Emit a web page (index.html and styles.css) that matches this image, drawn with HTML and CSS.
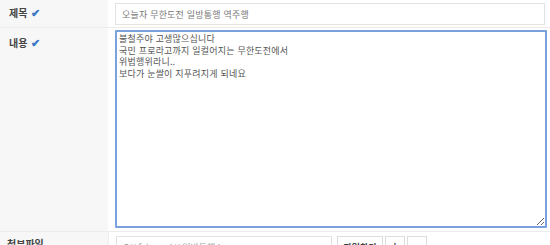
FILE: index.html
```html
<!DOCTYPE html>
<html lang="ko">
<head>
    <meta charset="UTF-8">
    <title>글쓰기</title>
    <link rel="stylesheet" href="styles.css">
</head>
<body>
    <div class="write-form">
        <div class="row row-title">
            <div class="label">제목 <span class="check">&#10004;</span></div>
            <div class="field">
                <input type="text" class="text-input" value="오늘자 무한도전 일방통행 역주행">
            </div>
        </div>
        <div class="row row-content">
            <div class="label">내용 <span class="check">&#10004;</span></div>
            <div class="field">
                <textarea class="content-area">불철주야 고생많으십니다
국민 프로라고까지 일컬어지는 무한도전에서
위법행위라니..
보다가 눈쌀이 지푸려지게 되네요</textarea>
            </div>
        </div>
        <div class="row row-file">
            <div class="label">첨부파일</div>
            <div class="field file-field">
                <input type="text" class="file-input" value="C:\\fakepath\\일방통행.jpg">
                <button class="btn">파일찾기</button>
                <button class="btn btn-sq">+</button>
                <button class="btn btn-sq">&minus;</button>
            </div>
        </div>
    </div>
</body>
</html>
```

FILE: styles.css
```css
body {
    margin: 0;
    background-color: #fff;
    font-family: "Noto Sans CJK KR", "Noto Sans", sans-serif;
    font-size: 11px;
    color: #333;
}
.write-form {
    width: 550px;
}
.row {
    display: grid;
    grid-template-columns: 108px 1fr;
    border-bottom: 1px solid #ececec;
}
.label {
    background-color: #f7f7f7;
    padding-left: 9px;
    font-weight: bold;
    color: #444;
    font-size: 10px;
}
.check {
    color: #3a78c8;
    font-size: 11px;
    margin-left: 1px;
}
.field {
    padding-left: 7px;
    padding-right: 4px;
}
.row-title {
    height: 27px;
}
.row-title .label {
    line-height: 24px;
}
.text-input {
    box-sizing: border-box;
    width: 430px;
    height: 22px;
    margin-top: 3px;
    border: 1px solid #e3e3e3;
    padding: 0 6px;
    font-family: inherit;
    font-size: 9px;
    letter-spacing: 0.2px;
    color: #777;
    outline: none;
}
.row-content {
    height: 203px;
}
.row-content .label {
    line-height: 26px;
    padding-top: 1px;
}
.content-area {
    display: block;
    box-sizing: border-box;
    width: 432px;
    height: 198px;
    margin-top: 2px;
    border: 2px solid #7aa3dd;
    border-radius: 1px;
    padding: 1px 2px;
    font-family: inherit;
    font-size: 9px;
    letter-spacing: 0.2px;
    line-height: 11.5px;
    color: #555;
    resize: vertical;
    outline: none;
}
.row-file {
    height: 40px;
    border-bottom: none;
}
.row-file .label {
    padding-left: 7px;
    line-height: 20px;
    padding-top: 2px;
}
.file-field {
    display: flex;
    gap: 2px;
    padding-top: 4px;
    border-left: 1px solid #eee;
}
.file-input {
    box-sizing: border-box;
    width: 216px;
    height: 22px;
    margin-right: 3px;
    border: 1px solid #e3e3e3;
    padding: 0 6px;
    font-family: inherit;
    font-size: 9px;
    color: #999;
}
.btn {
    box-sizing: border-box;
    height: 22px;
    background-color: #fff;
    border: 1px solid #ddd;
    font-family: inherit;
    font-size: 9px;
    font-weight: bold;
    color: #444;
    padding: 0;
    width: 46px;
}
.btn-sq {
    width: 20px;
    padding-bottom: 4px;
    font-size: 11px;
    color: #555;
}
```
